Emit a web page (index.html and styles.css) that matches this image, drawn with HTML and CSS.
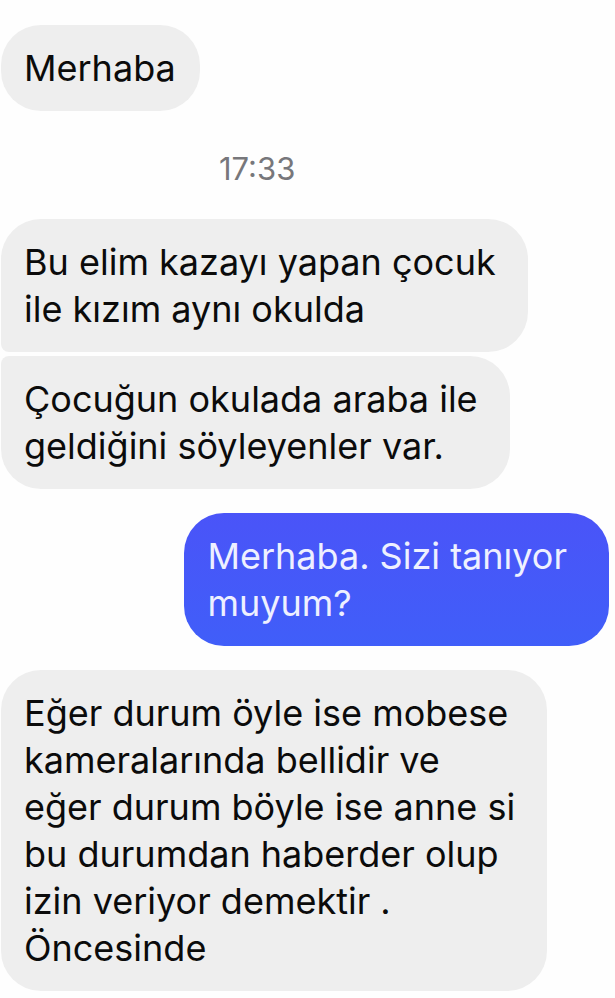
FILE: index.html
```
<!DOCTYPE html>
<html lang="tr">
<head>
    <meta charset="UTF-8">
    <meta name="viewport" content="width=device-width, initial-scale=1.0">
    <title>Mesajlar</title>
    <link rel="stylesheet" href="styles.css">
</head>
<body>
    <main class="chat">
        <div class="message received">Merhaba</div>

        <time class="time" datetime="17:33">17:33</time>

        <div class="group">
            <div class="message received multiline first">Bu elim kazayı yapan çocuk<br>ile kızım aynı okulda</div>
            <div class="message received multiline last">Çocuğun okulada araba ile<br>geldiğini söyleyenler var.</div>
        </div>

        <div class="message sent">Merhaba. Sizi tanıyor<br>muyum?</div>

        <div class="message received multiline">Eğer durum öyle ise mobese<br>kameralarında bellidir ve<br>eğer durum böyle ise anne si<br>bu durumdan haberder olup<br>izin veriyor demektir .<br>Öncesinde</div>
    </main>
</body>
</html>
```

FILE: styles.css
```
* {
    box-sizing: border-box;
}
body {
    margin: 0;
    background-color: #fefefe;
    font-family: Inter, "Liberation Sans", sans-serif;
    font-size: 36px;
    line-height: 47px;
    color: #0b0b0b;
}
.chat {
    display: flex;
    flex-direction: column;
    align-items: flex-start;
    gap: 24px;
    padding: 25px 6px 7px 1px;
}
.group {
    display: flex;
    flex-direction: column;
    align-items: flex-start;
    gap: 4px;
}
.message {
    padding: 20px 24px 19px 23px;
    border-radius: 40px;
}
.received {
    background-color: #eeeeee;
}
.multiline {
    padding-right: 32px;
}
.first {
    border-bottom-left-radius: 8px;
}
.last {
    border-top-left-radius: 8px;
}
.sent {
    align-self: flex-end;
    padding-right: 42px;
    background: linear-gradient(#4a54f8, #405ef9);
    color: #eef0ff;
}
.time {
    padding: 14px 0 6px;
    margin-left: 218px;
    font-size: 31px;
    line-height: 40px;
    color: #77777b;
}
```
